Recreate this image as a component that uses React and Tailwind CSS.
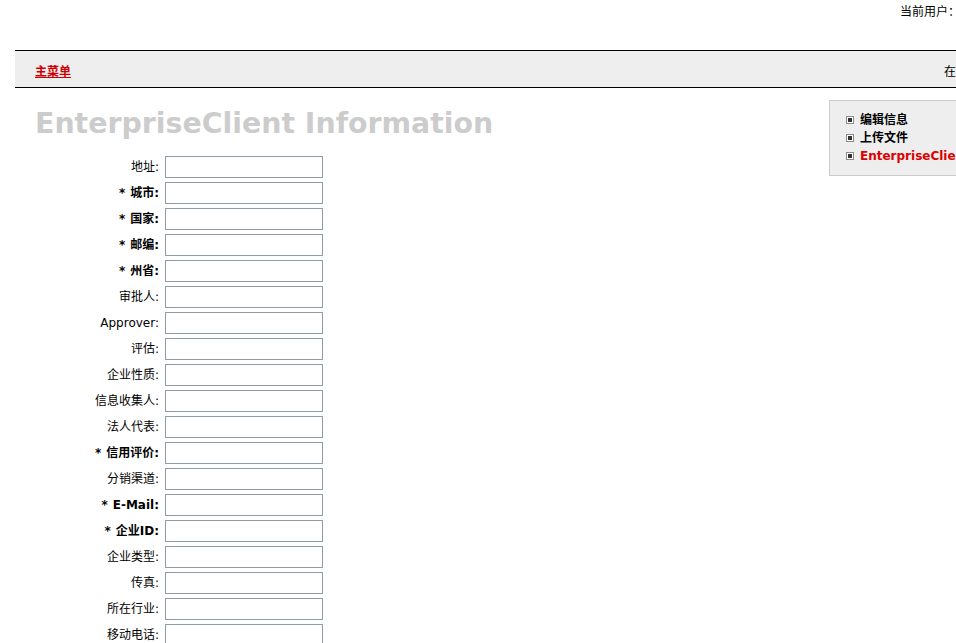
const fields = [
  { label: "地址", req: false },
  { label: "城市", req: true },
  { label: "国家", req: true },
  { label: "邮编", req: true },
  { label: "州省", req: true },
  { label: "审批人", req: false },
  { label: "Approver", req: false },
  { label: "评估", req: false },
  { label: "企业性质", req: false },
  { label: "信息收集人", req: false },
  { label: "法人代表", req: false },
  { label: "信用评价", req: true },
  { label: "分销渠道", req: false },
  { label: "E-Mail", req: true },
  { label: "企业ID", req: true },
  { label: "企业类型", req: false },
  { label: "传真", req: false },
  { label: "所在行业", req: false },
  { label: "移动电话", req: false },
  { label: "联系人", req: false },
];

const font = "font-['DejaVu_Sans','Noto_Sans_CJK_SC',sans-serif]";

function Bullet() {
  return (
    <span className="w-[8px] h-[8px] border border-[#8a8a8a] bg-white flex items-center justify-center shrink-0">
      <span className="w-[4px] h-[4px] bg-[#333]" />
    </span>
  );
}

function FieldRow({ label, req }) {
  return (
    <div className="flex items-center h-[26px]">
      <div className={`w-[130px] pr-[6px] text-right text-[12px] text-black ${req ? "font-bold" : ""}`}>
        {req && <span className="mr-[5px]">*</span>}
        {label}:
      </div>
      <input
        type="text"
        className="w-[158px] h-[22px] border border-[#8e9bab] bg-white outline-none"
      />
    </div>
  );
}

export default function App() {
  return (
    <div className={`w-[956px] h-[643px] overflow-hidden bg-white ${font}`}>
      <div className="h-[50px] flex justify-end">
        <div className="text-[12px] text-black pt-[3px] whitespace-nowrap w-[56px]">当前用户：admin</div>
      </div>

      <div className="ml-[15px] h-[38px] border-t border-b border-black bg-[#eeeeee] flex items-center pt-[6px]">
        <a href="#" className="ml-[20px] text-[12px] font-bold text-[#cc0000] underline">
          主菜单
        </a>
        <div className="ml-auto w-[12px] whitespace-nowrap text-[12px] text-black">在线人数：1</div>
      </div>

      <div className="flex">
        <div className="pl-[35px] flex-1">
          <h1 className="mt-[19px] text-[28.4px] leading-[34px] font-bold text-[#cccccc]">
            EnterpriseClient Information
          </h1>
          <div className="mt-[13px]">
            {fields.map((f) => (
              <FieldRow key={f.label} {...f} />
            ))}
          </div>
        </div>
        <div className="w-[127px] shrink-0">
          <div className="mt-[12px] w-[160px] h-[76px] border border-[#cccccc] bg-[#eeeeee] pl-[16px] pt-[10px] flex flex-col">
            <div className="flex items-center gap-[6px] h-[18px] leading-[18px] text-[12px] font-bold text-black whitespace-nowrap">
              <Bullet />
              编辑信息
            </div>
            <div className="flex items-center gap-[6px] h-[18px] leading-[18px] text-[12px] font-bold text-black whitespace-nowrap">
              <Bullet />
              上传文件
            </div>
            <div className="flex items-center gap-[6px] h-[18px] leading-[18px] text-[12px] font-bold text-[#dd0000] whitespace-nowrap">
              <Bullet />
              EnterpriseClient
            </div>
          </div>
        </div>
      </div>
    </div>
  );
}
